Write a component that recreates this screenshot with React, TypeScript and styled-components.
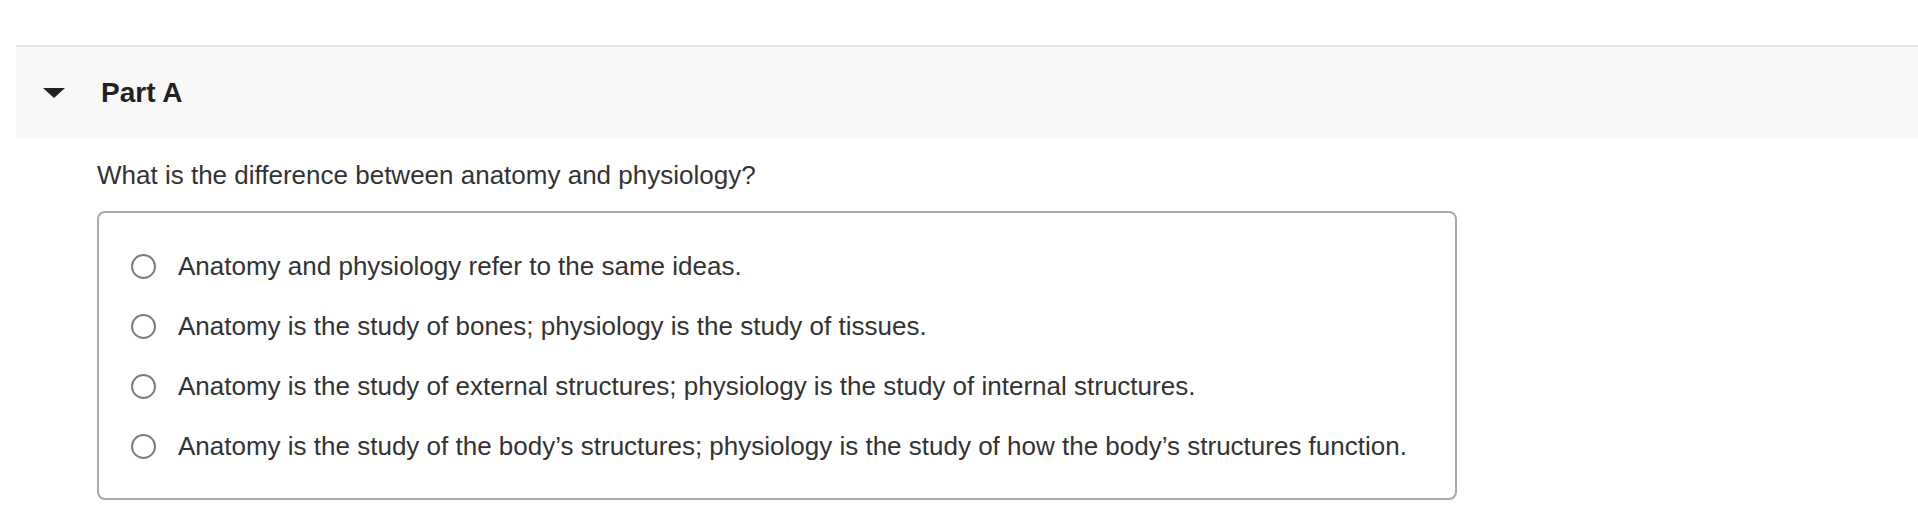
import React from 'react';
import styled, { createGlobalStyle } from 'styled-components';

const GlobalStyle = createGlobalStyle`
  body {
    margin: 0;
    background: #fff;
    font-family: 'Liberation Sans', Arial, Helvetica, sans-serif;
    color: #333;
  }
`;

const Page = styled.div`
  padding-top: 45px;
  padding-left: 16px;
`;

const Section = styled.section`
  border-top: 2px solid #e4e4e4;
`;

const PartHeader = styled.div`
  height: 91px;
  background: #f8f8f8;
  display: flex;
  align-items: center;
  padding-left: 27px;
`;

const Caret = styled.span`
  width: 0;
  height: 0;
  border-left: 11px solid transparent;
  border-right: 11px solid transparent;
  border-top: 10px solid #222;
  margin-right: 36px;
`;

const PartTitle = styled.h2`
  margin: 0;
  font-size: 28px;
  font-weight: 700;
  color: #222;
  line-height: 1;
`;

const Body = styled.div`
  padding-left: 81px;
  width: 1360px;
`;

const Question = styled.p`
  margin: 22px 0 21px;
  font-size: 26px;
  line-height: 30px;
  color: #333;
`;

const Choices = styled.div`
  border: 2px solid #a9a9a9;
  border-radius: 8px;
  padding: 23px 0 22px;
  height: 289px;
  box-sizing: border-box;
  display: flex;
  flex-direction: column;
`;

const Choice = styled.label`
  display: flex;
  align-items: center;
  height: 60px;
  padding-left: 32px;
  font-size: 26px;
  color: #333;
`;

const Radio = styled.span`
  width: 25px;
  height: 25px;
  box-sizing: border-box;
  border: 2px solid #7d7d7d;
  border-radius: 50%;
  margin-right: 22px;
  flex-shrink: 0;
`;

const options = [
  'Anatomy and physiology refer to the same ideas.',
  'Anatomy is the study of bones; physiology is the study of tissues.',
  'Anatomy is the study of external structures; physiology is the study of internal structures.',
  'Anatomy is the study of the body\u2019s structures; physiology is the study of how the body\u2019s structures function.',
];

export default function App() {
  return (
    <>
      <GlobalStyle />
      <Page>
        <Section>
          <PartHeader>
            <Caret />
            <PartTitle>Part A</PartTitle>
          </PartHeader>
          <Body>
            <Question>What is the difference between anatomy and physiology?</Question>
            <Choices>
              {options.map((o) => (
                <Choice key={o}>
                  <Radio />
                  {o}
                </Choice>
              ))}
            </Choices>
          </Body>
        </Section>
      </Page>
    </>
  );
}
